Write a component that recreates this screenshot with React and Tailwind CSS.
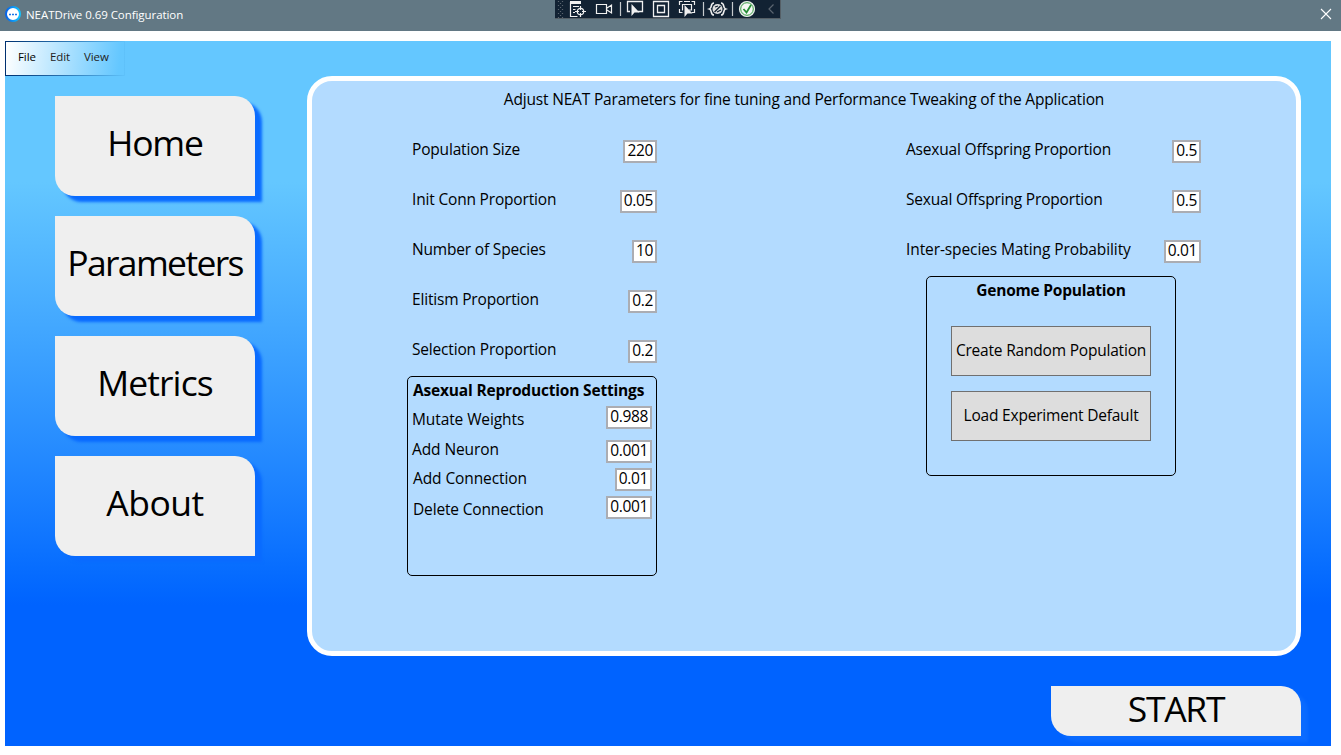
const face = "font-['Open_Sans','Noto_Sans',sans-serif]";

function Field({ children }) {
  return (
    <div className="h-[23px] shrink-0 border-2 border-[#abadb3] bg-white px-[2px] text-[15.5px] leading-[17px] tracking-[-0.35px] text-black">
      {children}
    </div>
  );
}

function Row({ label, value, track = "tracking-[-0.18px]" }) {
  return (
    <div className="flex h-[50px] items-start justify-between pt-[14px]">
      <span className={`-mt-[2px] pl-[5px] text-[15.5px] leading-[22px] ${track}`}>{label}</span>
      <Field>{value}</Field>
    </div>
  );
}

function NavButton({ label, track }) {
  return (
    <button className={`flex h-[100px] w-[200px] items-center justify-center rounded-tr-[20px] rounded-bl-[20px] bg-[#efefef] pb-[8px] text-[35.5px] leading-[48px] shadow-[7px_6px_3px_#0a6bff] ${track}`}>
      {label}
    </button>
  );
}

function DebugBar() {
  return (
    <div className="absolute top-0 left-[555px] h-[19px] w-[226px] border-r border-b border-[#555f66] bg-[#122233]">
      <svg width="225" height="18" viewBox="0 0 225 18" fill="none" stroke="#f0f0f0" strokeWidth="1.2">
        <path d="M3.500 1v17M7.500 1v17" stroke="#5c6670" strokeDasharray="1 3" />
        <path d="M5.500 3v15" stroke="#5c6670" strokeDasharray="1 3" />
        <path d="M15.500 2v14.500h7M18 6.500h6M18 9.500h2.500M18 12.500h2" />
        <path d="M15 2.500h11" strokeWidth="3" />
        <circle cx="25.500" cy="11.500" r="3.200" />
        <path d="M25.500 6v4M25.500 13v4M20 11.500h4M27 11.500h4" />
        <path d="M41.500 4.500h10v9h-10zM52 8l4.500-3v8L52 10" />
        <path d="M65.500 2v14M148.500 2v14M177.500 2v14" stroke="#c5c9cc" />
        <path d="M75 11.500h-2.500v-10h15v10H83" strokeWidth="1.300" />
        <path d="M76.500 4v12l3-3.500h5z" fill="#f0f0f0" stroke="none" />
        <path d="M98.500 1.500h15v15h-15zM102.500 5.500h7v7h-7z" strokeWidth="1.300" />
        <path d="M124.500 5V1.500h3M136.500 1.500h3V5M124.500 9v3.500h3M139.500 9v3.500h-3M129 1.500h6M128 10h-.500V4.500h9V10H134" />
        <path d="M129.500 5v12l3-3.500h5z" fill="#f0f0f0" stroke="none" />
        <path d="M159 3c-4 0-1.500 5-4.500 6 3 1 .500 6 4.500 6M166 3c4 0 1.500 5 4.500 6-3 1-.500 6-4.500 6" strokeWidth="1.600" />
        <circle cx="162.500" cy="9" r="5" fill="#dedede" stroke="none" />
        <path d="M159.500 12l6-6M160 7l3-1M162 12l4-2" stroke="#122233" strokeWidth="1.300" />
        <circle cx="192" cy="9" r="7.500" fill="#f4f8f4" stroke="#e8efe8" />
        <circle cx="192" cy="9" r="6.300" stroke="#389a45" strokeWidth="1" />
        <path d="M188.500 9l3 3.500 4.500-7.500" stroke="#258c35" strokeWidth="1.800" />
        <path d="M218.500 4.500L214 9l4.500 4.500" stroke="#5b6570" />
      </svg>
    </div>
  );
}

function TitleBar() {
  return (
    <header className="relative flex h-[31px] items-center justify-between bg-[#627884] text-white">
      <div className="flex items-center pl-[5px]">
        <svg width="16" height="16" viewBox="0 0 16 16" className="-mt-[3px]">
          <defs>
            <linearGradient id="ring" x1="0" y1="0" x2="1" y2="0">
              <stop offset="0" stopColor="#0763e8" />
              <stop offset="1" stopColor="#12c4ff" />
            </linearGradient>
          </defs>
          <circle cx="8" cy="8" r="7" fill="#fff" stroke="url(#ring)" strokeWidth="2" />
          <path d="M4 8.500h2M7 8.500h2M10 8.500h2" stroke="#1876e8" strokeWidth="1.300" />
        </svg>
        <span className="-mt-[1px] ml-[5px] text-[11.5px] tracking-[-0.06px]">NEATDrive 0.69 Configuration</span>
      </div>
      <DebugBar />
      <svg width="12" height="12" viewBox="0 0 12 12" className="mr-[9px] -mt-[3px]" stroke="#fff" strokeWidth="1.100">
        <path d="M1 1l10 10M11 1L1 11" />
      </svg>
    </header>
  );
}

function MenuBar() {
  return (
    <nav className="flex h-[35px] w-[120px] bg-linear-to-r from-[#003070] to-[#5fc2fb] p-px">
      <div className="flex h-full w-full items-center gap-[14px] bg-linear-[97deg] from-white from-0% to-[#64c7ff] to-95% pb-[3px] pl-[12px] text-[11.5px] tracking-[-0.08px] text-[#222]">
        <span className="text-black">File</span>
        <span>Edit</span>
        <span>View</span>
      </div>
    </nav>
  );
}

const mutations = [
  { label: "Mutate Weights", value: "0.988", row: "h-[34px]", text: "mt-[2px] tracking-[-0.1px]" },
  { label: "Add Neuron", value: "0.001", row: "h-[28px]", text: "-mt-[2px] tracking-[-0.1px]" },
  { label: "Add Connection", value: "0.01", row: "h-[28px]", text: "-mt-px pl-px tracking-[-0.1px]" },
  { label: "Delete Connection", value: "0.001", row: "h-[28px]", text: "mt-[2px] pl-px tracking-[-0.16px]" },
];

function AsexualSettings() {
  return (
    <section className="h-[200px] w-[250px] rounded-[5px] border border-black px-[4px]">
      <h2 className="mt-[2px] mb-[5px] pl-[1px] text-[15.5px] leading-[22px] font-bold tracking-[-0.18px] whitespace-nowrap">Asexual Reproduction Settings</h2>
      {mutations.map((m) => (
        <div key={m.label} className={`flex items-start justify-between ${m.row}`}>
          <span className={`text-[15.5px] leading-[22px] ${m.text}`}>{m.label}</span>
          <Field>{m.value}</Field>
        </div>
      ))}
    </section>
  );
}

function GenomePopulation() {
  const button = "h-[50px] w-[200px] border border-[#707070] bg-[#dddddd] text-[15.5px] tracking-[-0.2px] whitespace-nowrap";
  return (
    <section className="ml-[25px] flex h-[200px] w-[250px] flex-col items-center rounded-[5px] border border-black">
      <h2 className="mt-[2px] mb-[25px] text-[15.5px] leading-[22px] font-bold tracking-[-0.23px]">Genome Population</h2>
      <button className={button}>Create Random Population</button>
      <button className={`mt-[15px] ${button}`}>Load Experiment Default</button>
    </section>
  );
}

export default function App() {
  return (
    <div className={`h-[755px] w-[1341px] overflow-hidden bg-white text-black ${face}`}>
      <TitleBar />
      <main className="mt-[10px] ml-[5px] flex h-[705px] w-[1326px] flex-col bg-linear-to-b from-[#64c7ff] from-20% to-[#0063ff] to-80%">
        <MenuBar />
        <div className="flex h-[580px]">
          <aside className="ml-[50px] flex w-[252px] flex-col gap-[20px] pt-[20px]">
            <NavButton label="Home" track="tracking-[-1.2px]" />
            <NavButton label="Parameters" track="tracking-[-1.65px]" />
            <NavButton label="Metrics" track="tracking-[-0.9px]" />
            <NavButton label="About" track="tracking-[-0.5px]" />
          </aside>
          <section className="h-[580px] w-[994px] rounded-[25px] border-[5px] border-white bg-[#b3dbff]">
            <h1 className="mt-[7px] mb-[16px] text-center text-[15.5px] leading-[22px] tracking-[-0.185px]">
              Adjust NEAT Parameters for fine tuning and Performance Tweaking of the Application
            </h1>
            <div className="flex justify-between px-[95px]">
              <div className="w-[250px]">
                <Row label="Population Size" value="220" />
                <Row label="Init Conn Proportion" value="0.05" />
                <Row label="Number of Species" value="10" />
                <Row label="Elitism Proportion" value="0.2" />
                <Row label="Selection Proportion" value="0.2" />
                <AsexualSettings />
              </div>
              <div className="w-[300px]">
                <Row label="Asexual Offspring Proportion" value="0.5" />
                <Row label="Sexual Offspring Proportion" value="0.5" />
                <Row label="Inter-species Mating Probability" value="0.01" track="tracking-[-0.1px]" />
                <GenomePopulation />
              </div>
            </div>
          </section>
        </div>
        <button className="mt-[30px] mr-[30px] flex h-[50px] w-[250px] items-center justify-center self-end rounded-tr-[20px] rounded-bl-[20px] bg-[#efefef] pb-[6px] text-[35.5px] leading-[44px] tracking-[-1.3px] shadow-[7px_6px_3px_#0a6bff]">
          START
        </button>
      </main>
    </div>
  );
}
